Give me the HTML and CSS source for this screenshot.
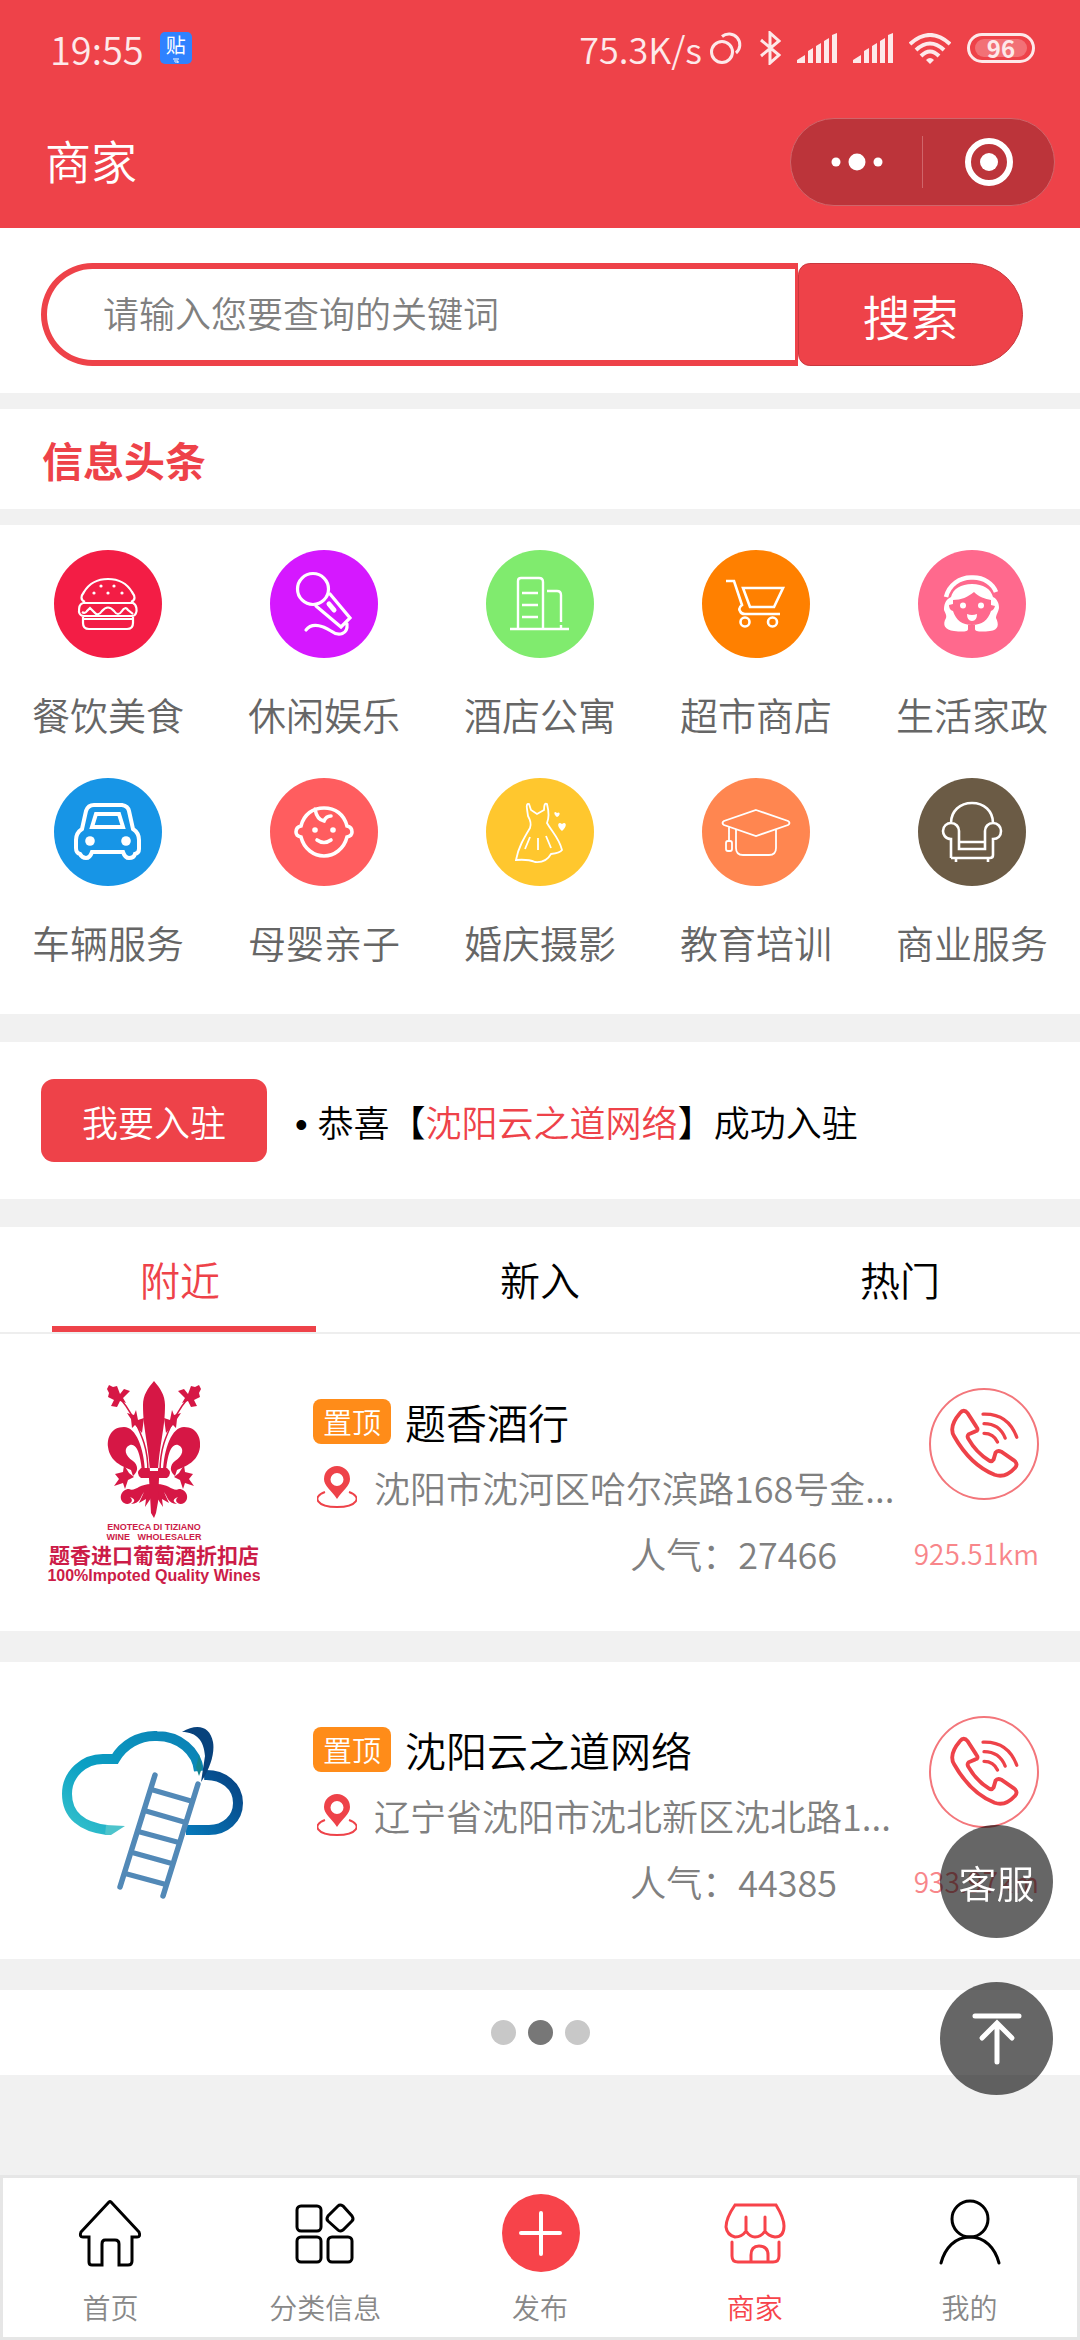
FILE: index.html
```html
<!DOCTYPE html>
<html lang="zh-CN">
<head>
    <meta charset="UTF-8">
    <meta name="viewport" content="width=device-width, initial-scale=1.0">
    <title>商家</title>
    <link rel="stylesheet" href="styles.css">
</head>
<body>
    <header class="header">
        <div class="status-bar">
            <div class="status-left">
                <span>19:55</span>
                <span class="app-badge">贴<svg width="8" height="6" viewBox="0 0 8 6"><path d="M1 2h6M2 4h4v2H3"/></svg></span>
            </div>
            <div class="status-right">
                <span class="speed">75.3K/s</span>
                <svg width="34" height="34" viewBox="0 0 34 34"><g fill="none" stroke="#fde9ea" stroke-width="3"><circle cx="12" cy="21" r="10.5"/><path d="M12 5.500A10.500 10.500 0 1 1 26 22"/></g></svg>
                <svg width="21" height="34" viewBox="0 0 21 34"><path d="M1 9L19 24L10 32V2L19 10L1 25" fill="none" stroke="#fde9ea" stroke-width="3"/></svg>
                <svg width="40" height="30" viewBox="0 0 40 30"><path d="M0 30V27L8 22V30ZM11 30V18L16 15V30ZM19 30V13L24 10V30ZM27 30V8L32 5V30ZM35 30V2L40 0V30Z" fill="#fde9ea"/></svg>
                <svg width="40" height="30" viewBox="0 0 40 30"><path d="M0 30V27L8 22V30ZM11 30V18L16 15V30ZM19 30V13L24 10V30ZM27 30V8L32 5V30ZM35 30V2L40 0V30Z" fill="#fde9ea"/></svg>
                <svg width="42" height="31" viewBox="0 0 42 31"><g fill="none" stroke="#fde9ea" stroke-width="4"><path d="M1 11Q21-7 41 11"/><path d="M7 17Q21 4 35 17"/><path d="M12 23Q21 14 30 23"/></g><path d="M17 27Q21 23 25 27L21 31Z" fill="#fde9ea"/></svg>
                <span class="battery"><b>96</b></span>
            </div>
        </div>
        <div class="title-bar">
            <h1>商家</h1>
            <div class="capsule">
                <button aria-label="更多"><svg width="52" height="18" viewBox="0 0 52 18"><g fill="#fff"><circle cx="5" cy="9" r="4.500"/><circle cx="26" cy="9" r="8.500"/><circle cx="47" cy="9" r="4.500"/></g></svg></button>
                <button aria-label="关闭"><svg width="50" height="50" viewBox="0 0 50 50"><circle cx="25" cy="25" r="21" fill="none" stroke="#fff" stroke-width="6"/><circle cx="25" cy="25" r="9" fill="#fff"/></svg></button>
            </div>
        </div>
    </header>

    <main>
        <form class="search" onsubmit="return false">
            <input type="text" placeholder="请输入您要查询的关键词" aria-label="关键词">
            <button>搜索</button>
        </form>

        <section class="headline">
            <h2>信息头条</h2>
        </section>

        <nav class="categories">
            <a href="#">
                <svg viewBox="0 0 108 108"><circle cx="54" cy="54" r="54" fill="#f31d45"/><g fill="none" stroke="#fff" stroke-width="2.200"><path d="M31 52C26 50 27 46 30 42C36 32 45 29 54 29S72 32 78 42C81 46 82 50 77 52M29 53H79C83 55 83 61 82 63Q81 66 78 66H30Q26 66 25 62C25 58 25 54 29 53M28 62Q31 64 33 61L36 58L40 62Q44 67 48 61Q54 54 60 61Q64 67 68 61Q71 56 74 60L79 64M29 67V73Q29 79 35 79H73Q79 79 79 73V67M29 69H79"/></g><g fill="#fff"><circle cx="47" cy="36" r="1.600"/><circle cx="60" cy="36" r="1.600"/><circle cx="40" cy="43" r="1.600"/><circle cx="54" cy="43" r="1.600"/><circle cx="68" cy="43" r="1.600"/></g></svg>
                <span>餐饮美食</span>
            </a>
            <a href="#">
                <svg viewBox="0 0 108 108"><circle cx="54" cy="54" r="54" fill="#d518ff"/><g fill="none" stroke="#fff" stroke-width="3.200" stroke-linecap="round"><circle cx="43" cy="39" r="15.500"/><path d="M60 44L80 68L71 77L46 56M36 80C42 72 53 76 61 81C69 87 78 84 77 74"/></g><path d="M59 54L64 60" stroke="#fff" stroke-width="5" stroke-linecap="round"/></svg>
                <span>休闲娱乐</span>
            </a>
            <a href="#">
                <svg viewBox="0 0 108 108"><circle cx="54" cy="54" r="54" fill="#80eb6e"/><g fill="none" stroke="#fff" stroke-width="2.400"><path d="M24 79H83M32 79V31Q32 28 35 28H53Q57 28 57 32V79M36 43H52M36 55H52M36 67H52M61 41H71Q75 41 75 45V72M75 75V79"/></g></svg>
                <span>酒店公寓</span>
            </a>
            <a href="#">
                <svg viewBox="0 0 108 108"><circle cx="54" cy="54" r="54" fill="#ff8000"/><g fill="none" stroke="#fff" stroke-width="2.600"><path d="M24 31H32L40 55Q36 58 38 61Q39 64 43 64H78M41 38H81L72 57H48Z"/><circle cx="43" cy="72" r="4.500"/><circle cx="70.500" cy="72" r="4.500"/></g></svg>
                <span>超市商店</span>
            </a>
            <a href="#">
                <svg viewBox="0 0 108 108"><circle cx="54" cy="54" r="54" fill="#ff698d"/><path d="M54 34C43 34 35 39 33 47C27 50 26 55 26 60C27 63 29 65 28 68C24 75 27 80 36 81C44 82 50 82 50 79V75H57V79C57 82 64 82 72 81C81 80 81 74 78 68C78 65 80 63 81 58C81 53 79 49 75 47C73 39 65 34 54 34Z" fill="#fff"/><path d="M35 50C43 50 50 47 56 42C61 47 67 49 73 50V55L77 56Q76 60 73 61C70 70 64 75 54 75S38 70 35 61Q31 60 31 55L35 54Z" fill="#ff698d"/><g fill="#fff"><circle cx="45" cy="55.500" r="3"/><circle cx="63" cy="55.500" r="3"/><path d="M49 64Q54 66 59 64Q59 71 54 71T49 64Z"/></g><path d="M28 47C31 35 42 27 54 27.500C66 27 75 34 78 42" fill="none" stroke="#fff" stroke-width="4.500"/></svg>
                <span>生活家政</span>
            </a>
            <a href="#">
                <svg viewBox="0 0 108 108"><circle cx="54" cy="54" r="54" fill="#1795e6"/><g fill="none" stroke="#fff" stroke-width="4"><path d="M40 27H68Q74 28 75 33L79 51Q85 55 85 62V71Q85 75 81 76Q80 80 75 80Q71 80 69 74H38Q36 80 32 80Q28 80 26 76Q22 75 22 70V62Q22 55 28 51L32 33Q34 27 40 27Z"/><path d="M42 36H65L69 49H38Z"/></g><circle cx="36" cy="63" r="4.800" fill="#fff"/><circle cx="72" cy="63" r="4.800" fill="#fff"/></svg>
                <span>车辆服务</span>
            </a>
            <a href="#">
                <svg viewBox="0 0 108 108"><circle cx="54" cy="54" r="54" fill="#ff5d5f"/><g fill="none" stroke="#fff" stroke-width="3.600" stroke-linecap="round"><path d="M31 48C34 36 43 30 54 30S74 36 77 48Q82 49 82 54Q82 58 77 59C74 71 64 78 54 78S34 71 31 59Q26 58 26 54Q26 49 31 48ZM45 31Q47 42 54 43Q56 38 61 38M47 62Q54 67 61 62"/></g><circle cx="45" cy="52" r="2.800" fill="#fff"/><circle cx="63" cy="52" r="2.800" fill="#fff"/></svg>
                <span>母婴亲子</span>
            </a>
            <a href="#">
                <svg viewBox="0 0 108 108"><circle cx="54" cy="54" r="54" fill="#ffc72e"/><path d="M43 26Q40 25 41 31L42 38Q46 45 44 50C38 60 32 70 30 82Q42 81 49 84Q60 85 65 76Q74 75 76 72C73 60 66 54 61 45Q64 38 61 26Q58 24 58 32L51 36L45 32ZM44 59L39 71M52 60V72M60 58L65 70" fill="none" stroke="#fff" stroke-width="1.800"/><path d="M76 53C70 48 72 43 76 46C80 43 82 48 76 53ZM71 39C67 36 68 32 71 35C74 33 75 37 71 39Z" fill="#fff"/></svg>
                <span>婚庆摄影</span>
            </a>
            <a href="#">
                <svg viewBox="0 0 108 108"><circle cx="54" cy="54" r="54" fill="#ff8650"/><g fill="none" stroke="#fff" stroke-width="1.800"><path d="M54 32L86 43Q89 45 86 47L54 58L22 47Q19 45 22 43ZM34 51V70Q34 77 41 77H67Q74 77 74 70V51M27 49V63"/><rect x="24" y="63" width="6" height="10" rx="2"/></g></svg>
                <span>教育培训</span>
            </a>
            <a href="#">
                <svg viewBox="0 0 108 108"><circle cx="54" cy="54" r="54" fill="#6b5b45"/><path d="M33 45C33 33 42 25 54 25S75 33 75 45M33 80V61C27 61 25 56 25 53C25 48 29 45 33 45C38 45 41 49 41 53V71H67V53C67 49 70 45 75 45C80 45 83 49 83 53C83 58 80 61 75 61V77Q75 80 72 80H33M41 64H67M38 80V84M70 80V84" fill="none" stroke="#fff" stroke-width="2.600"/></svg>
                <span>商业服务</span>
            </a>
        </nav>

        <section class="join">
            <button>我要入驻</button>
            <p>• 恭喜【<em>沈阳云之道网络</em>】成功入驻</p>
        </section>

        <div class="tabs">
            <a href="#" class="active">附近</a>
            <a href="#">新入</a>
            <a href="#">热门</a>
        </div>

        <article class="shop">
            <svg class="shop-logo" viewBox="0 0 213 205">
                <defs>
                    <g id="fleur-half">
                        <path d="M98 91C97 67 89 46 77 46C64 46 60 57 61 66C63 81 75 85 84 89L86 95C92 90 91 84 86 80C78 75 76 67 83 64C91 62 94 78 95 91Z"/>
                        <path d="M101 91C101 67 95 55 86 36L79 25L68 11" fill="none" stroke="#d61745" stroke-width="1.500"/>
                        <path d="M62 4L66 6L70 5L73 13L77 8L83 10L76 17L79 22L73 20L70 26L64 25L67 19L61 16L62 12L60 8ZM80 32L87 34L89 29L91 39L97 37L95 52L88 44L85 47L84 38Z"/>
                        <path d="M77 84L76 91L68 93L72 98L67 105L76 102L78 108L81 99L87 96L82 92Z"/>
                        <path d="M104 103C92 103 88 111 82 108C74 108 71 118 77 122C82 125 88 120 83 116C90 119 87 121 84 123C94 122 93 116 97 111L92 122L99 118L98 126L104 117L107 124V97H102Z"/>
                    </g>
                </defs>
                <g fill="#d61745">
                    <use href="#fleur-half"/>
                    <use href="#fleur-half" transform="translate(214 0) scale(-1 1)"/>
                    <path d="M107 0C101 7 96 14 96 24C96 48 101 60 103 90H111C113 60 118 48 118 24C118 14 113 7 107 0ZM94 87H120Q126 92 120 97H94Q88 92 94 87ZM102 97H112L111 121L109 132L107 137L104 132Z"/>
                </g>
                <g class="logo-text">
                    <text x="107" y="149" class="tiny">ENOTECA DI TIZIANO</text>
                    <text x="107" y="159" class="tiny">WINE &#160; WHOLESALER</text>
                    <text x="107" y="182" class="cn">题香进口葡萄酒折扣店</text>
                    <text x="107" y="200" class="en">100%Impoted Quality Wines</text>
                </g>
            </svg>
            <div class="shop-info">
                <h3><span class="tag">置顶</span>题香酒行</h3>
                <p class="address"><svg width="40" height="42" viewBox="0 0 40 42"><path d="M20 0A13 13 0 0 1 33 13C33 20 26 24 20 33C14 24 7 20 7 13A13 13 0 0 1 20 0ZM20 7A6.500 6.500 0 1 0 20 20A6.500 6.500 0 0 0 20 7Z"/><path d="M8 26C-6 31 0 41 20 41S46 31 32 26" class="ring"/></svg>沈阳市沈河区哈尔滨路168号金...</p>
                <p class="views">人气：27466</p>
            </div>
            <div class="shop-side">
                <a href="tel:" class="call" aria-label="拨打电话"><svg viewBox="0 0 110 112"><path d="M30 24Q34 19 38 24L47 38Q50 42 46 43L39 46Q37 48 39 51Q47 65 60 73Q63 75 65 72L67 65Q69 62 73 64L86 73Q91 77 87 81Q77 92 66 88Q41 78 24 48Q18 38 30 24Z" stroke-width="4"/><path d="M54 25Q80 24 89 49M55 35Q71 35 77 50M55 45Q65 45 69 54" stroke-width="3.400"/></svg></a>
                <span class="distance">925.51km</span>
            </div>
        </article>

        <article class="shop">
            <svg class="shop-logo" viewBox="0 0 213 205">
                <defs>
                    <linearGradient id="cloud-left" x1="0" y1="1" x2="1" y2="0"><stop offset="0" stop-color="#36c2cc"/><stop offset=".4" stop-color="#0ba0c4"/><stop offset="1" stop-color="#0b7fb4"/></linearGradient>
                    <linearGradient id="cloud-right" x1="1" y1="0" x2="0" y2="1"><stop offset="0" stop-color="#074383"/><stop offset="1" stop-color="#0778b9"/></linearGradient>
                </defs>
                <path d="M60 121C35 118 20 106 20 85C20 65 37 49 58 50H68C76 36 92 26 110 27C132 27 150 42 152 62" fill="none" stroke="url(#cloud-left)" stroke-width="10"/>
                <path d="M59 116L78 117L64 126H58Z" fill="#4dc4cc"/>
                <path d="M157 66C176 65 191 77 191 94C191 110 178 121 162 121H139" fill="none" stroke="url(#cloud-right)" stroke-width="10"/>
                <path d="M135 23C150 14 163 17 166 33C168 44 163 60 154 73L158 47C157 32 150 23 135 23Z" fill="#08427c"/>
                <path d="M152 46L155 59L152 67L149 58Z" fill="#15858e"/>
                <g stroke="#5289b7" stroke-width="5.500" stroke-linecap="round"><path d="M108 66L73 178M151 75L116 187"/><path d="M106 81L144 92M99 102L137 113M93 123L130 133M87 144L123 154M80 165L117 175" stroke-width="5"/></g>
            </svg>
            <div class="shop-info">
                <h3><span class="tag">置顶</span>沈阳云之道网络</h3>
                <p class="address"><svg width="40" height="42" viewBox="0 0 40 42"><path d="M20 0A13 13 0 0 1 33 13C33 20 26 24 20 33C14 24 7 20 7 13A13 13 0 0 1 20 0ZM20 7A6.500 6.500 0 1 0 20 20A6.500 6.500 0 0 0 20 7Z"/><path d="M8 26C-6 31 0 41 20 41S46 31 32 26" class="ring"/></svg>辽宁省沈阳市沈北新区沈北路1...</p>
                <p class="views">人气：44385</p>
            </div>
            <div class="shop-side">
                <a href="tel:" class="call" aria-label="拨打电话"><svg viewBox="0 0 110 112"><path d="M30 24Q34 19 38 24L47 38Q50 42 46 43L39 46Q37 48 39 51Q47 65 60 73Q63 75 65 72L67 65Q69 62 73 64L86 73Q91 77 87 81Q77 92 66 88Q41 78 24 48Q18 38 30 24Z" stroke-width="4"/><path d="M54 25Q80 24 89 49M55 35Q71 35 77 50M55 45Q65 45 69 54" stroke-width="3.400"/></svg></a>
                <span class="distance">933.97km</span>
            </div>
        </article>

        <div class="loading"><i></i><i class="on"></i><i></i></div>
    </main>

    <div class="float-buttons">
        <button>客服</button>
        <button aria-label="返回顶部"><svg width="52" height="54" viewBox="0 0 52 54"><path d="M4 4H48M26 50V12M11 26L26 11L41 26" fill="none" stroke="#fff" stroke-width="5" stroke-linecap="round"/></svg></button>
    </div>

    <nav class="tab-bar">
        <a href="#">
            <svg viewBox="0 0 80 80"><path d="M39 8Q40 7 41 8L69 38Q71 43 67 43H62V67Q62 71 58 71H49V50Q49 46 45 46H35Q32 46 32 50V71H22Q19 71 19 68V43H13Q9 43 11 38Z"/></svg>
            <span>首页</span>
        </a>
        <a href="#">
            <svg viewBox="0 0 80 80"><rect x="12" y="12" width="24" height="25" rx="4"/><rect x="12" y="43" width="24" height="25" rx="4"/><rect x="43" y="43" width="24" height="25" rx="4"/><path d="M53 12Q55 10 58 12L67 22Q69 25 67 27L58 36Q55 38 53 36L43 27Q41 25 43 22Z"/></svg>
            <span>分类信息</span>
        </a>
        <a href="#">
            <svg viewBox="0 0 80 80"><circle cx="41" cy="39" r="39" class="plus"/><path d="M21 39H60M41 19V60" class="plus-line"/></svg>
            <span>发布</span>
        </a>
        <a href="#" class="active">
            <svg viewBox="0 0 80 80"><path d="M20 11H61Q69 24 69 32Q69 43 60 43Q53 42 50 37Q46 43 40 43Q35 43 31 37Q27 43 20 43Q12 41 11 33Q11 24 20 11ZM31 23V37M50 23V37M17 48V62Q17 68 23 68H58Q64 68 64 62V48M36 68V61Q36 52 44 52Q53 52 53 61V68"/></svg>
            <span>商家</span>
        </a>
        <a href="#">
            <svg viewBox="0 0 80 80"><circle cx="40" cy="25" r="18"/><path d="M11 69C15 54 25 43 40 43S65 54 69 69"/></svg>
            <span>我的</span>
        </a>
    </nav>
</body>
</html>
```
FILE: styles.css
```css
* {
    margin: 0;
    padding: 0;
    box-sizing: border-box;
}

body {
    background: #f1f1f1;
    color: #000;
    font-family: "Noto Sans CJK SC", sans-serif;
    font-size: 36px;
    font-weight: 350;
    overflow-x: hidden;
}

a {
    color: inherit;
    text-decoration: none;
}

button, input {
    font: inherit;
    border: none;
}

button {
    color: #fff;
    cursor: pointer;
}

svg {
    display: block;
    flex-shrink: 0;
}

/* header */
.header {
    background: #ee4249;
    color: #fff;
}

.status-bar {
    display: flex;
    justify-content: space-between;
    align-items: center;
    height: 96px;
    padding: 0 45px 0 50px;
    color: #fde9ea;
}

.status-left, .status-right {
    display: flex;
    align-items: center;
    gap: 16px;
}

.status-left {
    font-size: 38px;
}

.speed {
    margin-right: -8px;
}

.app-badge {
    display: flex;
    flex-direction: column;
    align-items: center;
    width: 32px;
    height: 32px;
    border-radius: 5px;
    background: #2f82ff;
    color: #fff;
    font-size: 20px;
    font-weight: 400;
    line-height: 25px;
}

.app-badge path {
    fill: none;
    stroke: #fff;
}

.battery {
    width: 68px;
    height: 30px;
    padding: 3px 5px;
    border: 3px solid #fde9ea;
    border-radius: 15px;
    font-size: 24px;
    line-height: 18px;
    text-align: center;
}

.battery b {
    display: block;
    background: rgba(255, 255, 255, 0.25);
    border-radius: 9px;
    font-weight: 700;
}

.title-bar {
    display: flex;
    justify-content: space-between;
    align-items: center;
    height: 132px;
    padding: 0 25px 0 45px;
}

.title-bar h1 {
    padding-bottom: 6px;
    font-size: 46px;
    font-weight: 350;
}

.capsule {
    display: flex;
    align-items: center;
    width: 265px;
    height: 88px;
    border: 1px solid #d0656a;
    border-radius: 44px;
    background: #bc343a;
}

.capsule button {
    display: flex;
    justify-content: center;
    align-items: center;
    flex: 1;
    height: 52px;
    background: none;
}

.capsule button + button {
    border-left: 1px solid #d0656a;
}

/* search */
.search {
    display: flex;
    padding: 35px 57px 27px 41px;
    background: #fff;
}

.search input {
    flex: 1;
    min-width: 0;
    height: 103px;
    padding: 0 56px 6px;
    border: 6px solid #ee4249;
    border-right-width: 3px;
    border-radius: 52px 0 0 52px;
    outline: none;
}

.search input::placeholder {
    color: #808080;
}

.search button {
    width: 225px;
    border: 1px solid #c9383e;
    border-radius: 12px 52px 52px 12px;
    background: #ee4249;
    font-size: 48px;
}

/* headline */
.headline {
    margin: 16px 0;
    padding: 20px 42px;
    background: #fff;
}

.headline h2 {
    color: #ee4249;
    font-size: 41px;
    line-height: 60px;
    font-weight: 700;
}

/* categories */
.categories {
    display: grid;
    grid-template-columns: repeat(5, 1fr);
    row-gap: 36px;
    padding: 25px 0 44px;
    background: #fff;
    color: #666;
    font-size: 38px;
    line-height: 56px;
}

.categories a {
    display: flex;
    flex-direction: column;
    align-items: center;
    gap: 28px;
}

.categories svg {
    width: 108px;
    height: 108px;
}

/* join */
.join {
    display: flex;
    align-items: center;
    gap: 28px;
    margin: 28px 0;
    padding: 37px 41px;
    background: #fff;
}

.join button {
    width: 226px;
    height: 83px;
    border-radius: 13px;
    background: #ee4249;
}

.join p {
    font-family: "Liberation Sans", "Noto Sans CJK SC", sans-serif;
}

.join em {
    color: #ee4249;
    font-style: normal;
}

/* tabs */
.tabs {
    display: flex;
    border-bottom: 2px solid #eee;
    background: #fff;
    font-size: 40px;
    line-height: 105px;
}

.tabs a {
    flex: 1;
    position: relative;
    text-align: center;
}

.tabs .active {
    color: #ee4249;
}

.tabs .active::after {
    content: '';
    position: absolute;
    left: 52px;
    right: 44px;
    bottom: 0;
    height: 6px;
    background: #ee4249;
}

/* shops */
.shop {
    display: flex;
    margin-bottom: 31px;
    padding: 47px 41px 45px 47px;
    background: #fff;
}

.shop-logo {
    width: 213px;
    height: 205px;
}

.logo-text {
    fill: #cc1c48;
    text-anchor: middle;
    font-weight: 700;
}

.logo-text .tiny {
    font: 700 9px "Liberation Sans", sans-serif;
}

.logo-text .cn {
    font-size: 21px;
}

.logo-text .en {
    font: 700 16px "Liberation Sans", sans-serif;
}

.shop-info {
    flex: 1;
    min-width: 0;
    padding: 7px 0 0 53px;
    color: #808080;
    line-height: 66px;
    white-space: nowrap;
}

.shop-info h3 {
    display: flex;
    align-items: center;
    gap: 14px;
    color: #000;
    font-size: 41px;
    font-weight: 350;
}

.tag {
    padding: 0 10px;
    border-radius: 8px;
    background: #ff8c19;
    color: #fff;
    font-size: 29px;
    line-height: 45px;
}

.address {
    display: flex;
    align-items: center;
    gap: 17px;
    padding-left: 4px;
}

.address path {
    fill: #ee4249;
}

.address .ring {
    fill: none;
    stroke: #ee4249;
    stroke-width: 2px;
}

.views {
    padding-right: 82px;
    text-align: right;
}

.shop-side {
    display: flex;
    flex-direction: column;
    align-items: flex-end;
    gap: 38px;
    width: 120px;
    padding-top: 7px;
}

.call {
    width: 110px;
    height: 112px;
    border: 2px solid #f3767b;
    border-radius: 50%;
}

.call path {
    fill: none;
    stroke: #ee4249;
    stroke-linecap: round;
}

.distance {
    color: #f8868a;
    font-size: 28px;
    line-height: 30px;
}

.loading {
    display: flex;
    justify-content: center;
    align-items: center;
    gap: 12px;
    height: 85px;
    background: #fff;
}

.loading i {
    width: 25px;
    height: 25px;
    border-radius: 50%;
    background: #c8c8c8;
}

.loading .on {
    background: #777;
}

/* floating buttons */
.float-buttons {
    position: fixed;
    right: 27px;
    bottom: 245px;
    display: flex;
    flex-direction: column;
    gap: 44px;
}

.float-buttons button {
    display: flex;
    justify-content: center;
    align-items: center;
    width: 113px;
    height: 113px;
    border-radius: 50%;
    background: rgba(0, 0, 0, 0.6);
    font-size: 38px;
}

/* bottom bar */
.tab-bar {
    position: fixed;
    left: 0;
    right: 0;
    bottom: 0;
    display: flex;
    padding: 16px 0 9px;
    border: 3px solid #e6e6e6;
    background: #fff;
    color: #888;
    font-size: 28px;
    line-height: 42px;
}

.tab-bar a {
    display: flex;
    flex: 1;
    flex-direction: column;
    align-items: center;
    gap: 12px;
}

.tab-bar svg {
    width: 80px;
    height: 80px;
    fill: none;
    stroke: #000;
    stroke-width: 3px;
    stroke-linecap: round;
}

.tab-bar .plus {
    fill: #f7434a;
    stroke: none;
}

.tab-bar .plus-line {
    stroke: #fff;
    stroke-width: 4px;
}

.tab-bar .active {
    color: #f7434a;
}

.tab-bar .active svg {
    stroke: #f7434a;
}
```
